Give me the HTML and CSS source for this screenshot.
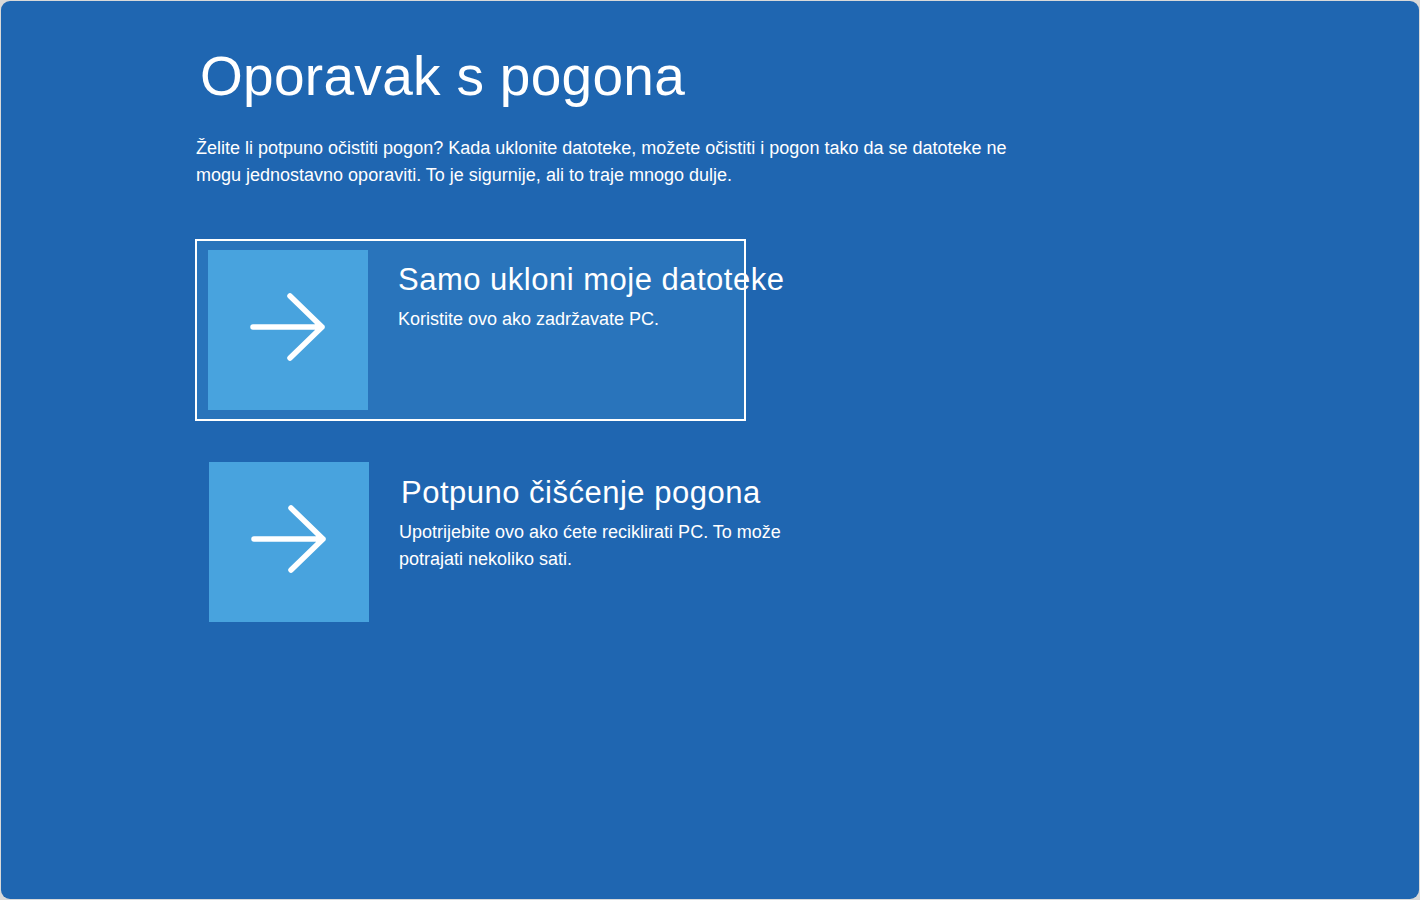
FILE: index.html
```html
<!DOCTYPE html>
<html lang="hr">
<head>
<meta charset="utf-8">
<title>Oporavak s pogona</title>
<link rel="stylesheet" href="styles.css">
</head>
<body>
<div class="screen">
  <main class="content">
    <h1 class="title">Oporavak s pogona</h1>
    <p class="intro">Želite li potpuno očistiti pogon? Kada uklonite datoteke, možete očistiti i pogon tako da se datoteke ne mogu jednostavno oporaviti. To je sigurnije, ali to traje mnogo dulje.</p>
    <div class="options">
      <div class="option selected">
        <div class="tile">
          <svg width="160" height="160" viewBox="0 0 160 160"><path d="M45 77H114M82 46L114 77L82 108" fill="none" stroke="#fff" stroke-width="5.5" stroke-linecap="round" stroke-linejoin="round"/></svg>
        </div>
        <div class="text">
          <div class="opt-title">Samo ukloni moje datoteke</div>
          <div class="opt-desc">Koristite ovo ako zadržavate PC.</div>
        </div>
      </div>
      <div class="option second">
        <div class="tile">
          <svg width="160" height="160" viewBox="0 0 160 160"><path d="M45 77H114M82 46L114 77L82 108" fill="none" stroke="#fff" stroke-width="5.5" stroke-linecap="round" stroke-linejoin="round"/></svg>
        </div>
        <div class="text">
          <div class="opt-title">Potpuno čišćenje pogona</div>
          <div class="opt-desc">Upotrijebite ovo ako ćete reciklirati PC. To može potrajati nekoliko sati.</div>
        </div>
      </div>
    </div>
  </main>
</div>
</body>
</html>
```
FILE: styles.css
```css
html, body { margin: 0; padding: 0; }
body {
  background: #d9d9d9;
  width: 1420px;
  height: 900px;
  overflow: hidden;
  font-family: "Liberation Sans", Arial, sans-serif;
  color: #fff;
}
.screen {
  box-sizing: border-box;
  margin: 1px;
  width: 1418px;
  height: 898px;
  background: #1f66b1;
  border-radius: 9px;
  overflow: hidden;
}
.content {
  padding: 43px 0 0 194px;
}
.title {
  margin: 0 0 0 5px;
  font-weight: 400;
  font-size: 55px;
  line-height: 64px;
  letter-spacing: 0.3px;
}
.intro {
  margin: 27px 0 0 1px;
  width: 840px;
  font-size: 18px;
  line-height: 27px;
}
.options {
  margin-top: 50px;
  display: flex;
  flex-direction: column;
  gap: 30px;
}
.option {
  box-sizing: border-box;
  width: 551px;
  height: 182px;
  padding: 9px 11px;
  display: flex;
  gap: 30px;
  border: 2px solid transparent;
}
.option.selected {
  background: #2974bb;
  border-color: #fff;
}
.option.second { margin-left: 1px; }
.option.second .text { padding-top: 13px; }
.option.second .opt-title { margin-left: 2px; }
.tile {
  flex: 0 0 160px;
  width: 160px;
  height: 160px;
  background: #48a3de;
}
.tile svg { display: block; }
.text {
  width: 420px;
  flex: 0 0 420px;
  padding-top: 12px;
}
.opt-title {
  font-size: 31px;
  line-height: 36px;
  letter-spacing: 0.5px;
  white-space: nowrap;
}
.opt-desc {
  margin-top: 8px;
  font-size: 18px;
  line-height: 27px;
}
```
